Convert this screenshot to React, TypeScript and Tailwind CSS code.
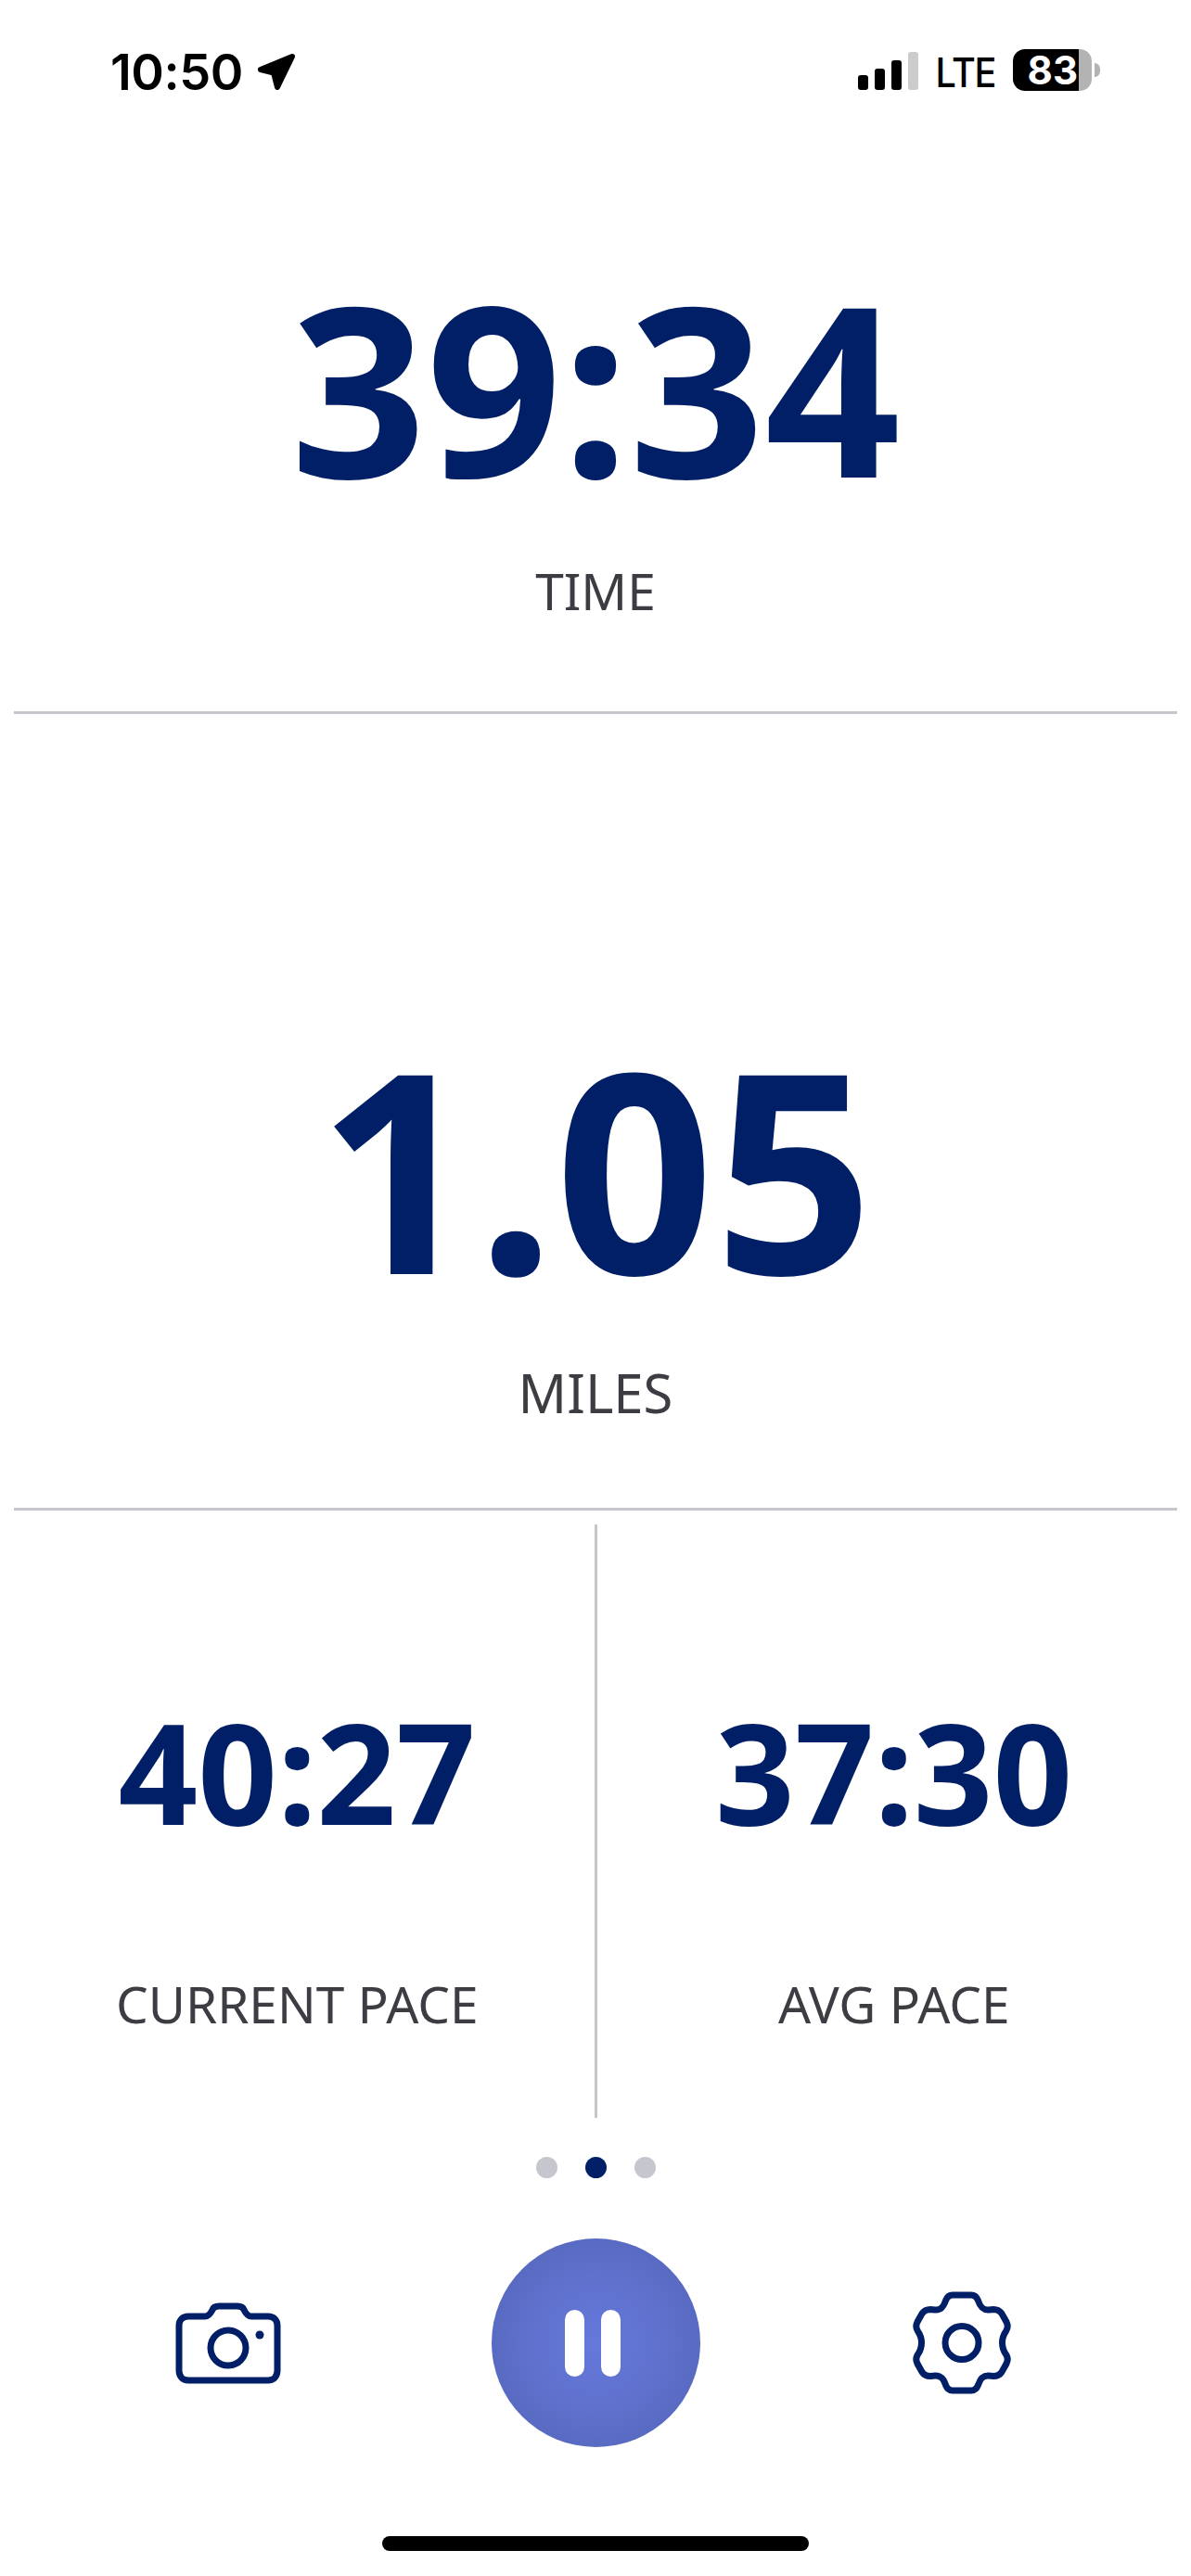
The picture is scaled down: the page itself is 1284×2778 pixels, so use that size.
import React from 'react';

const Stat = ({ value, label, size, gap, labelSize = 'text-[55px]' }: { value: string; label: string; size: string; gap: string; labelSize?: string }) => (
  <div className="flex flex-col items-center">
    <div className={`font-bold text-[#001f66] ${size}`}>{value}</div>
    <div className={`leading-[60px] text-[#3c3c43] ${labelSize} ${gap}`}>{label}</div>
  </div>
);

const StatusBar = () => (
  <div className="flex h-[150px] items-start justify-between pl-[119px] pr-[98px] pt-[45px] text-black">
    <div className="flex items-center gap-[14px] font-['Inter',sans-serif]">
      <span className="text-[54px] font-semibold leading-[66px] tracking-[-0.5px]">10:50</span>
      <svg width="44" height="44" viewBox="0 0 44 44">
        <path d="M39 5 L5 19 L19 22.5 L23 38 Z" fill="black" stroke="black" strokeWidth="6" strokeLinejoin="round" />
      </svg>
    </div>
    <div className="flex items-center pt-[5px]">
      <div className="flex h-[42px] items-end gap-[7px]">
        <div className="h-[16px] w-[11px] rounded-[3px] bg-black" />
        <div className="h-[23px] w-[11px] rounded-[3px] bg-black" />
        <div className="h-[32px] w-[11px] rounded-[3px] bg-black" />
        <div className="h-[41px] w-[11px] rounded-[3px] bg-[#cccccc]" />
      </div>
      <span className="ml-[15px] mt-[5px] font-['Inter',sans-serif] text-[44px] font-medium leading-[46px] tracking-[-1.5px] [transform:scaleX(0.9)]">
        LTE
      </span>
      <div className="ml-[16px] flex h-[45px] w-[85px]">
        <div className="flex w-[71px] items-center justify-end rounded-l-[13px] bg-black pr-[1px] font-['Inter',sans-serif] text-[42px] font-bold leading-[45px] text-white">
          83
        </div>
        <div className="flex-1 rounded-r-[13px] bg-[#b3b3b3]" />
      </div>
      <div className="ml-[3px] h-[15px] w-[6px] rounded-r-full bg-[#b3b3b3]" />
    </div>
  </div>
);

const CameraIcon = () => (
  <svg width="114" height="88" viewBox="0 0 114 88" fill="none" stroke="#001f66" strokeWidth="7">
    <path d="M14 15 H32 C36 15 38 12 40 8 C41 5 44 4 47 4 H67 C70 4 73 5 74 8 C76 12 78 15 82 15 H100 C106 15 110 19 110 25 V73 C110 80 106 84 100 84 H14 C8 84 4 80 4 73 V25 C4 19 8 15 14 15 Z" strokeLinejoin="round" />
    <circle cx="57" cy="49" r="19" />
    <circle cx="91" cy="35" r="4.5" fill="#001f66" stroke="none" />
  </svg>
);

const GearIcon = () => (
  <svg width="108" height="114" viewBox="0 0 108 114" fill="none" stroke="#001f66" strokeWidth="7">
    <path d="M44 5 H64 C68 5 70 7 71.5 11 C73.5 17 76 21.5 83 21 L88 20.5 C92 20.5 95 22 97 25 L102 34 C104 38 103.5 41 101.5 44 C98 49 97.5 53 97.5 56.5 C97.5 60 98 64 101.5 69 C103.5 72 104 75 102 79 L97 88 C95 91 92 92.5 88 92.5 L83 92 C76 91.5 73.5 96 71.5 102 C70 106 68 108 64 108 H44 C40 108 38 106 36.5 102 C34.5 96 32 91.5 25 92 L20 92.5 C16 92.5 13 91 11 88 L6 79 C4 75 4.5 72 6.5 69 C10 64 10.5 60 10.5 56.5 C10.5 53 10 49 6.5 44 C4.5 41 4 38 6 34 L11 25 C13 22 16 20.5 20 20.5 L25 21 C32 21.5 34.5 17 36.5 11 C38 7 40 5 44 5 Z" />
    <circle cx="54" cy="56.5" r="18" />
  </svg>
);

export default function App() {
  return (
    <div className="flex h-[2778px] w-[1284px] flex-col bg-white font-['Noto_Sans',sans-serif]">
      <StatusBar />

      <div className="flex h-[617px] justify-center pt-[151px]">
        <Stat value="39:34" label="TIME" size="text-[256px] leading-[230px]" gap="mt-[76px]" />
      </div>
      <div className="mx-[15px] h-[3px] bg-[#c6c6cc]" />

      <div className="flex h-[856px] justify-center pt-[358px]">
        <Stat value="1.05" label="MILES" labelSize="text-[58px]" size="text-[300px] leading-[260px]" gap="mt-[84px]" />
      </div>
      <div className="mx-[15px] h-[3px] bg-[#c6c6cc]" />

      <div className="mt-[15px] flex h-[640px]">
        <div className="flex flex-1 justify-center pt-[196px]">
          <Stat value="40:27" label="CURRENT PACE" size="text-[150px] leading-[140px]" gap="mt-[151px]" />
        </div>
        <div className="w-[3px] bg-[#c6c6cc]" />
        <div className="flex flex-1 justify-center pt-[196px]">
          <Stat value="37:30" label="AVG PACE" size="text-[150px] leading-[140px]" gap="mt-[151px]" />
        </div>
      </div>

      <div className="mt-[42px] flex justify-center gap-[30px]">
        <div className="size-[23px] rounded-full bg-[#c6c6cf]" />
        <div className="size-[23px] rounded-full bg-[#001f66]" />
        <div className="size-[23px] rounded-full bg-[#c6c6cf]" />
      </div>

      <div className="mt-[65px] grid grid-cols-3 items-center">
        <div className="flex justify-center">
          <div className="ml-[64px]"><CameraIcon /></div>
        </div>
        <div className="flex justify-center">
          <div className="flex size-[225px] items-center justify-center rounded-full bg-[radial-gradient(circle,#6579dc_0%,#5f71cc_45%,#5162b6_100%)]">
            <div className="mr-[6px] flex gap-[18px]">
              <div className="h-[72px] w-[21px] rounded-full bg-white" />
              <div className="h-[72px] w-[21px] rounded-full bg-white" />
            </div>
          </div>
        </div>
        <div className="flex justify-center">
          <div className="mr-[66px]"><GearIcon /></div>
        </div>
      </div>

      <div className="mt-[96px] flex justify-center">
        <div className="h-[16px] w-[460px] rounded-full bg-black" />
      </div>
    </div>
  );
}
